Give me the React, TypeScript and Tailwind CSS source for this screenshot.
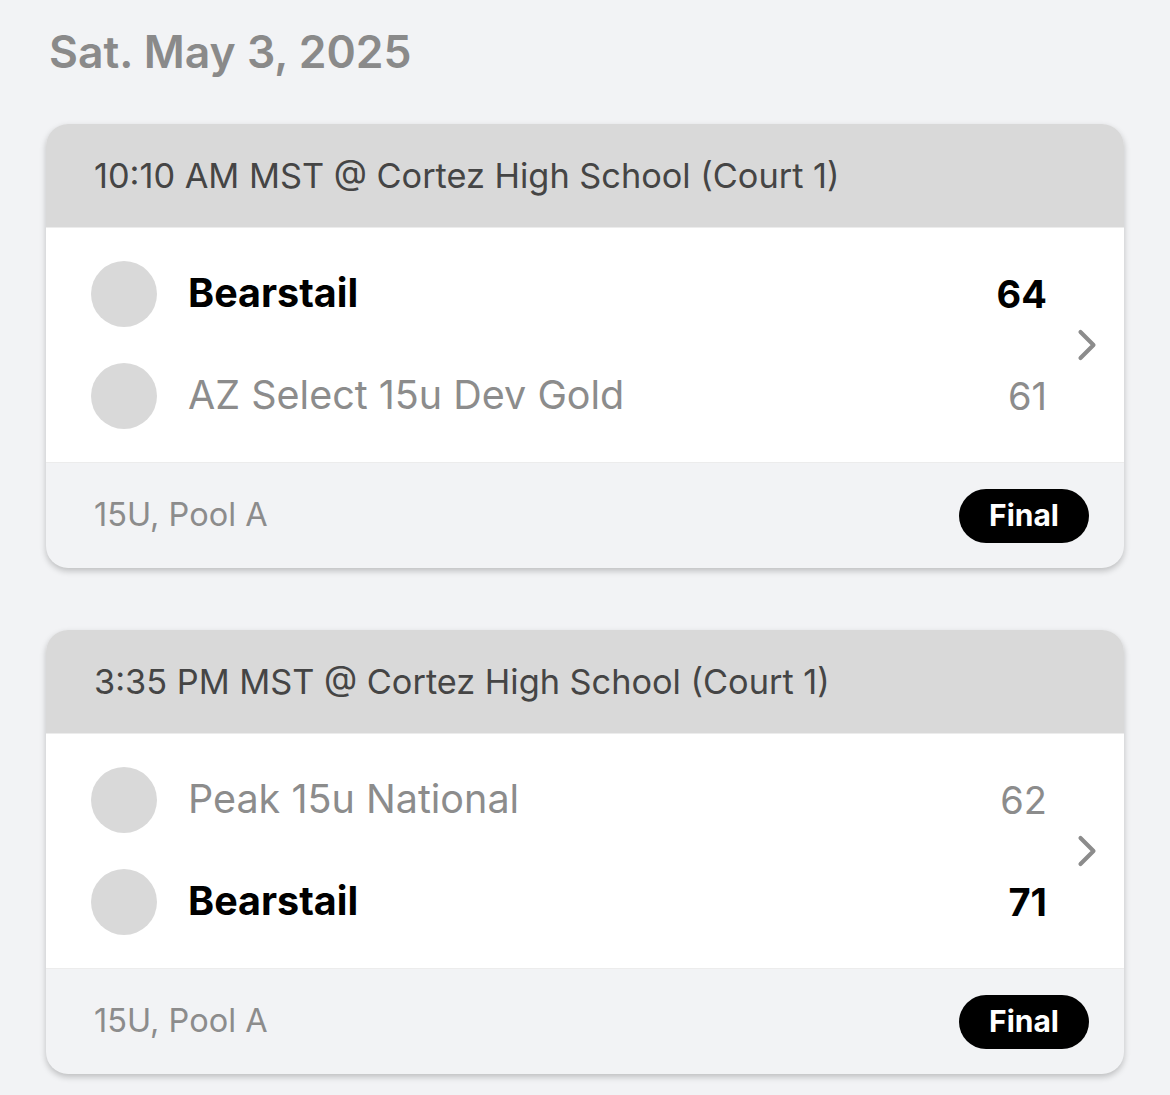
import { ChevronRight } from "lucide-react";

type Team = { name: string; score: number; won: boolean };
type Game = { time: string; teams: [Team, Team]; division: string; status: string };

const games: Game[] = [
  {
    time: "10:10 AM MST @ Cortez High School (Court 1)",
    teams: [
      { name: "Bearstail", score: 64, won: true },
      { name: "AZ Select 15u Dev Gold", score: 61, won: false },
    ],
    division: "15U, Pool A",
    status: "Final",
  },
  {
    time: "3:35 PM MST @ Cortez High School (Court 1)",
    teams: [
      { name: "Peak 15u National", score: 62, won: false },
      { name: "Bearstail", score: 71, won: true },
    ],
    division: "15U, Pool A",
    status: "Final",
  },
];

function TeamRow({ team }: { team: Team }) {
  const tone = team.won ? "font-bold text-black" : "font-normal text-[#8c8c8c]";
  return (
    <div className="flex h-[102px] items-center">
      <div className="h-[66px] w-[66px] shrink-0 rounded-full bg-[#d9d9d9]" />
      <div className={`ml-[31px] flex-1 text-[39.5px] leading-none ${tone}`}>{team.name}</div>
      <div className={`w-[120px] text-right text-[38px] leading-none ${tone}`}>{team.score}</div>
    </div>
  );
}

function GameCard({ game }: { game: Game }) {
  return (
    <div className="overflow-hidden rounded-[22px] bg-[#f2f3f5] shadow-[0_3px_6px_rgba(0,0,0,0.22)]">
      <div className="flex h-[103px] items-center bg-[#d9d9d9] px-[48px] text-[34.3px] text-[#454545]">
        {game.time}
      </div>
      <div className="relative border-t border-[#ececec] bg-white py-[15px] pl-[45px] pr-[77px]">
        {game.teams.map((t, i) => (
          <TeamRow key={i} team={t} />
        ))}
        <ChevronRight
          className="absolute right-[11px] top-1/2 -translate-y-1/2 text-[#8c8c8c]"
          size={52}
          strokeWidth={1.9}
        />
      </div>
      <div className="flex h-[106px] items-center justify-between border-t border-[#ececec] pl-[48px] pr-[35px]">
        <span className="text-[32.5px] text-[#8c8c8c]">{game.division}</span>
        <span className="flex h-[54px] items-center rounded-full bg-black px-[30px] text-[30px] font-bold text-white">
          {game.status}
        </span>
      </div>
    </div>
  );
}

export default function App() {
  return (
    <div
      className="min-h-screen bg-[#f2f3f5] px-[46px] pt-[20px]"
      style={{ fontFamily: "Inter, 'Noto Sans', sans-serif" }}
    >
      <h1 className="mb-[40px] pl-[3px] text-[44.5px] font-semibold leading-[64px] text-[#8a8a8a]">
        Sat. May 3, 2025
      </h1>
      <div className="flex flex-col gap-[62px]">
        {games.map((g, i) => (
          <GameCard key={i} game={g} />
        ))}
      </div>
    </div>
  );
}
